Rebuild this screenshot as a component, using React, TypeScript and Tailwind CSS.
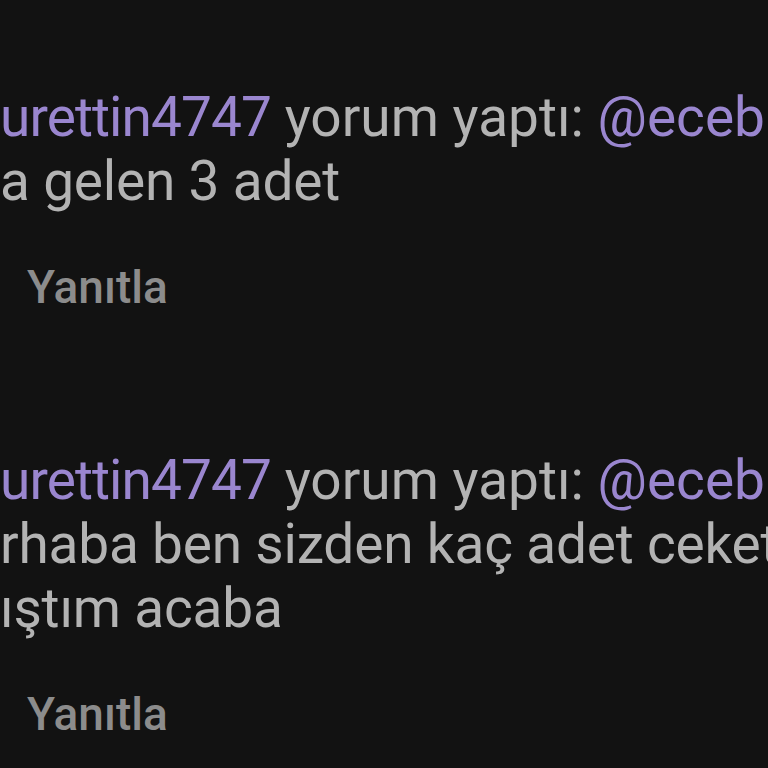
import React from "react";

type Comment = {
  user: string;
  mention: string;
  lines: string[];
};

const comments: Comment[] = [
  { user: "urettin4747", mention: "@ecebutik", lines: ["a gelen 3 adet"] },
  {
    user: "urettin4747",
    mention: "@ecebutik",
    lines: ["rhaba ben sizden kaç adet ceket al", "ıştım acaba"],
  },
];

function CommentItem({ c }: { c: Comment }) {
  return (
    <div className="flex flex-col">
      <div className="text-[55px] leading-[64px] whitespace-nowrap">
        <span className="text-[#9a86cf] tracking-[-0.9px]">{c.user}</span>
        <span className="text-[#b3b3b3]"> yorum yaptı: </span>
        <span className="text-[#9a86cf]">{c.mention}</span>
      </div>
      {c.lines.map((l) => (
        <div key={l} className="text-[55px] leading-[64px] whitespace-nowrap text-[#b3b3b3] tracking-[-0.2px]">
          {l}
        </div>
      ))}
      <button className="mt-[42px] self-start pl-[27px] text-[46px] leading-[64px] font-medium text-[#8c8c8c]">
        Yanıtla
      </button>
    </div>
  );
}

export default function App() {
  return (
    <div
      className="h-[768px] w-[768px] overflow-hidden bg-[#121212] pt-[85px]"
      style={{ fontFamily: "Roboto, 'Noto Sans', sans-serif" }}
    >
      <div className="flex flex-col gap-[129px]">
        {comments.map((c, i) => (
          <CommentItem key={i} c={c} />
        ))}
      </div>
    </div>
  );
}
